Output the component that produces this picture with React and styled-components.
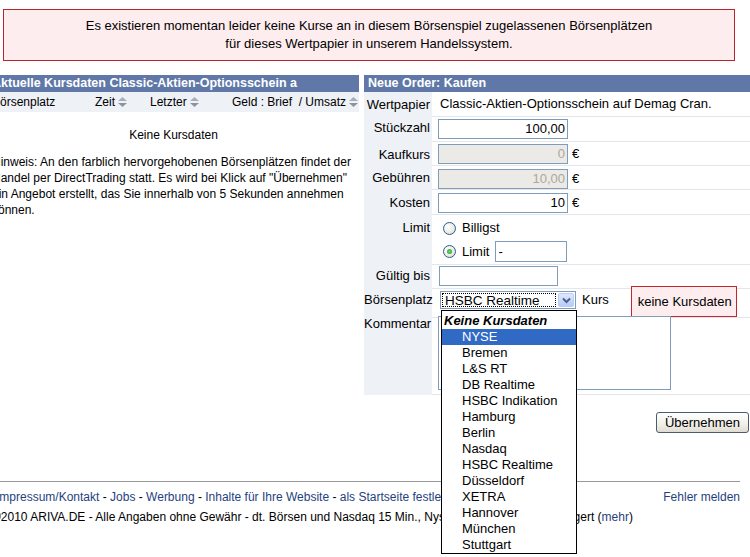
import styled, { createGlobalStyle } from "styled-components";

const GlobalStyle = createGlobalStyle`
  * { box-sizing: border-box; }
  body {
    margin: 0;
    background: #fff;
    font-family: "Liberation Sans", Arial, sans-serif;
    font-size: 13px;
    color: #000;
  }
`;

const Page = styled.div`
  width: 750px;
  height: 557px;
  overflow: hidden;
  position: relative;
`;

const Alert = styled.div`
  margin: 9px 0 0 3px;
  width: 732px;
  height: 52px;
  padding-top: 7px;
  border: 1px solid #b8262c;
  background: #fdedee;
  text-align: center;
  line-height: 18px;
`;

const Columns = styled.div`
  display: flex;
  gap: 5px;
  margin-top: 14px;
  margin-left: -12px;
`;

const LeftCol = styled.div`
  width: 371px;
  flex-shrink: 0;
`;

const RightCol = styled.div`
  width: 386px;
  flex-shrink: 0;
`;

const PanelHeader = styled.div`
  height: 17px;
  line-height: 17px;
  padding-left: 4px;
  background: #6078a8;
  color: #fff;
  font-weight: bold;
  font-size: 12.5px;
  white-space: nowrap;
  overflow: hidden;
`;

const SortBar = styled.div`
  display: flex;
  height: 20px;
  align-items: center;
  padding-left: 4px;
  background: #eef1f6;
  font-size: 12px;
  white-space: nowrap;
`;

const SortCell = styled.div`
  width: ${(p) => (p.$w ? `${p.$w}px` : "auto")};
  display: flex;
  align-items: center;
  gap: 2px;
`;

const SortIcon = () => (
  <svg width="11" height="12" viewBox="0 0 11 12">
    <polygon points="1,5 5.5,1 10,5" fill="#a7aeb9" />
    <polygon points="1,7 5.5,11 10,7" fill="#8c939e" />
  </svg>
);

const EmptyNote = styled.div`
  margin-top: 16px;
  text-align: center;
  font-size: 12px;
  line-height: 14px;
`;

const Hint = styled.div`
  margin-top: 12px;
  padding-left: 4px;
  font-size: 12px;
  line-height: 16px;
  white-space: nowrap;
`;

const FormRow = styled.div`
  display: grid;
  grid-template-columns: 68px 1fr;
  height: ${(p) => p.$h}px;
`;

const RowLabel = styled.div`
  background: #eef1f6;
  text-align: right;
  padding: ${(p) => p.$pt}px 2px 0 0;
  line-height: 16px;
  white-space: nowrap;
`;

const RowCell = styled.div`
  display: flex;
  flex-direction: ${(p) => (p.$col ? "column" : "row")};
  align-items: flex-start;
  padding: ${(p) => p.$pt}px 0 0 6px;
  border-bottom: 1px solid #e3e7ed;
  line-height: 16px;
  white-space: nowrap;
  position: relative;
`;

const PlainText = styled.span`
  margin-left: 2px;
`;

const TextInput = styled.div`
  width: ${(p) => p.$w}px;
  height: ${(p) => p.$h || 20}px;
  margin-left: ${(p) => p.$ml || 0}px;
  border: 1px solid #7f9db9;
  background: ${(p) => (p.$disabled ? "#ebeae6" : "#fff")};
  color: ${(p) => (p.$disabled ? "#aca899" : "#000")};
  text-align: ${(p) => (p.$left ? "left" : "right")};
  padding: 0 2px;
  line-height: ${(p) => (p.$h || 20) - 2}px;
`;

const Euro = styled.span`
  margin-left: 4px;
  line-height: 20px;
`;

const RadioLine = styled.div`
  display: flex;
  align-items: center;
  height: ${(p) => p.$h}px;
  margin-top: ${(p) => p.$mt || 0}px;
  gap: 6px;
`;

const Radio = styled.span`
  width: 13px;
  height: 13px;
  margin-left: 5px;
  border-radius: 50%;
  border: 1px solid #2c5b8e;
  background: radial-gradient(circle at 35% 35%, #ffffff 0%, #e6e6e0 70%, #c8c8c0 100%);
  display: flex;
  align-items: center;
  justify-content: center;

  &::after {
    content: "";
    width: 5px;
    height: 5px;
    border-radius: 50%;
    background: ${(p) => (p.$checked ? "radial-gradient(circle, #6fd66f, #1f9d1f)" : "transparent")};
  }
`;

const SelectWrap = styled.div`
  position: relative;
  margin-left: 2px;
`;

const SelectBox = styled.div`
  width: 136px;
  height: 18px;
  border: 1px solid #7f9db9;
  background: #fff;
  display: flex;
  align-items: stretch;
`;

const SelectValue = styled.span`
  flex: 1;
  margin: 1px;
  padding-left: 2px;
  border: 1px dotted #000;
  line-height: 13px;
  font-size: 13.5px;
`;

const SelectArrow = styled.span`
  width: 16px;
  margin: 1px;
  border: 1px solid #b9cdf7;
  border-radius: 2px;
  background: linear-gradient(#dfe8fd, #b6cafb);
  display: flex;
  align-items: center;
  justify-content: center;
`;

const OptionList = styled.div`
  position: absolute;
  top: calc(100% + 1px);
  left: 1px;
  width: 136px;
  border: 1px solid #000;
  background: #fff;
  padding-top: 2px;
  z-index: 10;
`;

const OptGroup = styled.div`
  height: 16px;
  line-height: 16px;
  padding-left: 2px;
  font-weight: bold;
  font-style: italic;
`;

const Option = styled.div`
  height: 16px;
  line-height: 16px;
  padding-left: 20px;
  background: ${(p) => (p.$selected ? "#316ac5" : "transparent")};
  color: ${(p) => (p.$selected ? "#fff" : "#000")};
`;

const KursLabel = styled.span`
  margin-left: 6px;
  line-height: 18px;
`;

const ErrorBox = styled.div`
  margin: -5px 0 0 22px;
  height: 31px;
  width: 106px;
  border: 1px solid #c0282d;
  background: #fdedee;
  padding-left: 6px;
  line-height: 29px;
`;

const TextArea = styled.div`
  width: 233px;
  height: 74px;
  border: 1px solid #7f9db9;
  background: #fff;
`;

const ButtonRow = styled.div`
  display: flex;
  justify-content: flex-end;
  margin-top: 17px;
  padding-right: 1px;
`;

const Button = styled.button`
  width: 93px;
  height: 21px;
  border: 1px solid #4e5a6e;
  border-radius: 3px;
  background: linear-gradient(#ffffff, #f0efe9 60%, #dedcd2);
  font-family: inherit;
  font-size: 13px;
  color: #000;
  padding: 0;
`;

const Footer = styled.div`
  margin: 48px 0 0 -12px;
  width: 752px;
  border-top: 1px solid #999;
  padding: 5px 0 0 4px;
  font-size: 12px;
  line-height: 20px;
  white-space: nowrap;
`;

const FooterLine = styled.div`
  display: flex;
  justify-content: space-between;
  padding-left: ${(p) => p.$indent || 0}px;
`;

const Link = styled.a`
  color: #1f3f7f;
  text-decoration: none;
`;

const places = [
  "NYSE",
  "Bremen",
  "L&S RT",
  "DB Realtime",
  "HSBC Indikation",
  "Hamburg",
  "Berlin",
  "Nasdaq",
  "HSBC Realtime",
  "Düsseldorf",
  "XETRA",
  "Hannover",
  "München",
  "Stuttgart",
];

export default function App() {
  return (
    <Page>
      <GlobalStyle />
      <Alert>
        Es existieren momentan leider keine Kurse an in diesem Börsenspiel zugelassenen Börsenplätzen
        <br />
        für dieses Wertpapier in unserem Handelssystem.
      </Alert>

      <Columns>
        <LeftCol>
          <PanelHeader>Aktuelle Kursdaten Classic-Aktien-Optionsschein a</PanelHeader>
          <SortBar>
            <SortCell $w={103}>Börsenplatz</SortCell>
            <SortCell $w={55}>
              Zeit <SortIcon />
            </SortCell>
            <SortCell $w={82}>
              Letzter <SortIcon />
            </SortCell>
            <SortCell>
              Geld : Brief&nbsp; / Umsatz <SortIcon />
            </SortCell>
          </SortBar>
          <EmptyNote>Keine Kursdaten</EmptyNote>
          <Hint>
            Hinweis: An den farblich hervorgehobenen Börsenplätzen findet der
            <br />
            Handel per DirectTrading statt. Es wird bei Klick auf "Übernehmen"
            <br />
            ein Angebot erstellt, das Sie innerhalb von 5 Sekunden annehmen
            <br />
            können.
          </Hint>
        </LeftCol>

        <RightCol>
          <PanelHeader>Neue Order: Kaufen</PanelHeader>

          <FormRow $h={25}>
            <RowLabel $pt={5}>Wertpapier</RowLabel>
            <RowCell $pt={4}>
              <PlainText>Classic-Aktien-Optionsschein auf Demag Cran.</PlainText>
            </RowCell>
          </FormRow>

          <FormRow $h={25}>
            <RowLabel $pt={3}>Stückzahl</RowLabel>
            <RowCell $pt={2}>
              <TextInput $w={130}>100,00</TextInput>
            </RowCell>
          </FormRow>

          <FormRow $h={24}>
            <RowLabel $pt={5}>Kaufkurs</RowLabel>
            <RowCell $pt={2}>
              <TextInput $w={130} $disabled>0</TextInput>
              <Euro>€</Euro>
            </RowCell>
          </FormRow>

          <FormRow $h={24}>
            <RowLabel $pt={4}>Gebühren</RowLabel>
            <RowCell $pt={3}>
              <TextInput $w={130} $disabled>10,00</TextInput>
              <Euro>€</Euro>
            </RowCell>
          </FormRow>

          <FormRow $h={25}>
            <RowLabel $pt={5}>Kosten</RowLabel>
            <RowCell $pt={3}>
              <TextInput $w={130}>10</TextInput>
              <Euro>€</Euro>
            </RowCell>
          </FormRow>

          <FormRow $h={50}>
            <RowLabel $pt={5}>Limit</RowLabel>
            <RowCell $pt={4} $col>
              <RadioLine $h={18}>
                <Radio />
                Billigst
              </RadioLine>
              <RadioLine $h={21} $mt={4}>
                <Radio $checked />
                Limit
                <TextInput $w={72} $h={21} $left>
                  -
                </TextInput>
              </RadioLine>
            </RowCell>
          </FormRow>

          <FormRow $h={24}>
            <RowLabel $pt={3}>Gültig bis</RowLabel>
            <RowCell $pt={1}>
              <TextInput $w={119} $ml={1} />
            </RowCell>
          </FormRow>

          <FormRow $h={27}>
            <RowLabel $pt={3}>Börsenplatz</RowLabel>
            <RowCell $pt={2}>
              <SelectWrap>
                <SelectBox>
                  <SelectValue>HSBC Realtime</SelectValue>
                  <SelectArrow>
                    <svg width="9" height="7" viewBox="0 0 9 7">
                      <polyline points="1,1.5 4.5,5 8,1.5" fill="none" stroke="#4d6185" strokeWidth="2" />
                    </svg>
                  </SelectArrow>
                </SelectBox>
                <OptionList>
                  <OptGroup>Keine Kursdaten</OptGroup>
                  {places.map((name, i) => (
                    <Option key={name + i} $selected={i === 0}>
                      {name}
                    </Option>
                  ))}
                </OptionList>
              </SelectWrap>
              <KursLabel>Kurs</KursLabel>
              <ErrorBox>keine Kursdaten</ErrorBox>
            </RowCell>
          </FormRow>

          <FormRow $h={79}>
            <RowLabel $pt={0}>Kommentar</RowLabel>
            <RowCell $pt={0}>
              <TextArea />
            </RowCell>
          </FormRow>

          <ButtonRow>
            <Button>Übernehmen</Button>
          </ButtonRow>
        </RightCol>
      </Columns>

      <Footer>
        <FooterLine $indent={4}>
          <span>
            <Link href="#">Impressum/Kontakt</Link> - <Link href="#">Jobs</Link> -{" "}
            <Link href="#">Werbung</Link> - <Link href="#">Inhalte für Ihre Website</Link> -{" "}
            <Link href="#">als Startseite festlegen</Link>
          </span>
          <Link href="#">Fehler melden</Link>
        </FooterLine>
        <FooterLine>
          <span>
            ©2010 ARIVA.DE - Alle Angaben ohne Gewähr - dt. Börsen und Nasdaq 15 Min., Nyse u. Amex 20 Min. verzögert (
            <Link href="#">mehr</Link>)
          </span>
        </FooterLine>
      </Footer>
    </Page>
  );
}
